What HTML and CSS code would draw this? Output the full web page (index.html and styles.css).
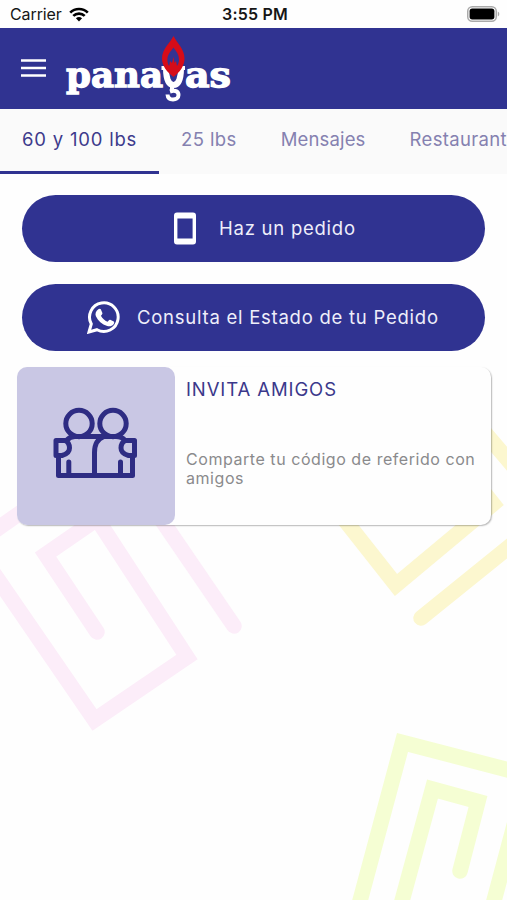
FILE: index.html
```html
<!DOCTYPE html>
<html lang="es">
<head>
<meta charset="utf-8">
<title>Panagas</title>
<link rel="stylesheet" href="styles.css">
</head>
<body>
<div class="app">
  <svg class="pattern" viewBox="0 0 507 900" fill="none" stroke-width="15.5" stroke-linecap="round">
    <g stroke="#fcedf9">
      <path d="M-14 562 94.500 720 187 657 97 519 45.500 554.500 97 632"/>
      <path d="M150 503 234 626"/>
      <path d="M-10 534 40 499"/>
    </g>
    <g stroke="#fcf7cf">
      <path d="M340 514 396 585 493 504 470 475"/>
      <path d="M421 618 520 538"/>
      <path d="M480 427 520 474"/>
    </g>
    <g stroke="#f5fed3">
      <path d="M357 912 402.500 742.500 520 773"/>
      <path d="M399 912 432.500 789 478 801.500 460 871"/>
      <path d="M491 912 515 822"/>
    </g>
  </svg>

  <div class="status">
    <div class="carrier">
      <span>Carrier</span>
      <svg class="wifi" viewBox="0 0 20 15" fill="none" stroke="#000" stroke-width="2.700">
        <path d="M1.200 5.600a12.600 12.600 0 0 1 17.600 0M4.300 8.900a8.200 8.200 0 0 1 11.400 0"/>
        <path d="M10 14.500 6.900 11.300a4.600 4.600 0 0 1 6.200 0Z" fill="#000" stroke="none"/>
      </svg>
    </div>
    <span class="time">3:55 PM</span>
    <svg class="battery" viewBox="0 0 33 16">
      <rect x=".75" y=".75" width="28.500" height="14.500" rx="4.500" fill="#fff" stroke="#aaa" stroke-width="1.500"/>
      <rect x="2.600" y="2.600" width="24.800" height="10.800" rx="2.600"/>
      <path d="M30.800 5.500q1.500.8 1.500 2.500t-1.500 2.500Z" fill="#aaa"/>
    </svg>
  </div>

  <header class="bar">
    <svg class="menu" viewBox="0 0 25 18" stroke="#fff" stroke-width="2.700"><path d="M0 1.500h25M0 9h25M0 16.500h25"/></svg>
    <svg class="logo" viewBox="0 0 170 70">
      <g class="logo-text">
        <text x="1" y="50.500" textLength="97" lengthAdjust="spacingAndGlyphs">pana</text>
        <text x="120" y="50.500" textLength="46" lengthAdjust="spacingAndGlyphs">as</text>
      </g>
      <g fill="none" stroke="#fff">
        <path d="M101 32c0 9 2 17 7.500 17s7.500-8 7.500-17" stroke-width="6"/>
        <path d="M96.500 32h6M114 32h6" stroke-width="4"/>
        <path d="M107 50v5.500" stroke-width="4"/>
        <path d="M105 55.500c6-2 8.500.5 8.500 3.500 0 3.200-2.600 4.500-5.500 4.500-3.200 0-5.300-1.700-5.500-5" stroke-width="4"/>
      </g>
      <path d="M108.500 0C112 7 119.500 13 119.500 22.500 119.500 30 115 36 108.500 41 102 36 97 30 97 22.500 97 13 105 7 108.500 0Z" fill="#d60c19"/>
      <path d="M108.500 11.500c3 4 5.500 7.500 5.500 12 0 3-1 5-2 6.500l-1-5-1.500 2-1-6-1.500 6-2-2-.8 5c-1.200-1.500-1.800-3.500-1.800-6.500 0-4.500 3-8 6.100-12Z" fill="#343391"/>
    </svg>
  </header>

  <nav class="tabs">
    <a class="tab active"><span class="t1">60 y 100 lbs</span></a>
    <a class="tab"><span class="t2">25 lbs</span></a>
    <a class="tab"><span class="t3">Mensajes</span></a>
    <a class="tab"><span class="t4">Restaurantes</span></a>
  </nav>

  <main>
    <button class="btn order">
      <svg class="phone" viewBox="0 0 22 33"><path fill="#fff" fill-rule="evenodd" d="M3 .5h16q3 0 3 3v26q0 3-3 3H3q-3 0-3-3v-26q0-3 3-3ZM3.400 6.500v20h15.200v-20Z"/></svg>
      <span>Haz un pedido</span>
    </button>
    <button class="btn state">
      <svg class="whats" viewBox="0 0 34 34">
        <path d="M2 32 4.300 24A14.300 14.300 0 1 1 10 29.700Z" fill="none" stroke="#fff" stroke-width="3"/>
        <path fill="#fff" d="M11.300 9.200c.7-.7 2-.8 2.500.1l1.600 3.700c.3 1-.9 2-1.500 2.800 1.600 2.900 3.700 4.700 6.600 5.900.9-.8 1.700-2.400 2.700-2l3.600 1.800c.8.5.2 2.300-.4 3.100-1.500 1.800-4 2.100-6.200 1.400-5.300-1.600-9.200-5-11.300-9.800-1-2.400-.1-5.300 2.400-7Z"/>
      </svg>
      <span>Consulta el Estado de tu Pedido</span>
    </button>

    <section class="card">
      <div class="thumb">
        <svg class="friends" viewBox="0 0 84 72" fill="none" stroke="#2e2c83" stroke-width="5" stroke-linejoin="round" stroke-linecap="round">
          <circle cx="26" cy="16.500" r="13.200"/>
          <circle cx="60" cy="16.500" r="13.200"/>
          <path d="M14 33q3-3.500 8-3.500h29q-9.500 3.500-9.500 16V68"/>
          <path d="M48 29.500h15q6 0 9 4"/>
          <path d="M5.500 68.500V49M5.500 68.500h74V49"/>
          <path d="M3 33.500h9q4.500 2 4.500 7.500T9 48.500H3Z"/>
          <path d="M81.500 33.500h-9q-4.500 2-4.500 7.500t7.500 7.500h6Z"/>
          <path d="M15.800 55v12M67.500 55v12"/>
        </svg>
      </div>
      <div class="info">
        <h2>INVITA AMIGOS</h2>
        <p><span>Comparte tu código de referido con</span> <span>amigos</span></p>
      </div>
    </section>
  </main>
</div>
</body>
</html>
```
FILE: styles.css
```css
* { box-sizing: border-box; }
body { margin: 0; background: #fefefe; font-family: Inter, "Liberation Sans", sans-serif; }
.app { position: relative; width: 507px; height: 900px; overflow: hidden; display: flex; flex-direction: column; isolation: isolate; }
.pattern { position: absolute; inset: 0; width: 507px; height: 900px; z-index: -1; }

.status { height: 28px; flex: none; display: grid; grid-template-columns: 1fr auto 1fr; align-items: center; padding: 0 7px 0 10px; background: #fefefe; font-size: 16px; color: #161616; }
.carrier { display: flex; align-items: center; gap: 7px; letter-spacing: -.1px; }
.wifi { width: 20px; height: 15px; }
.time { font-weight: 600; font-size: 16px; letter-spacing: .2px; }
.battery { width: 33px; height: 16px; justify-self: end; }

.bar { height: 80.5px; flex: none; display: flex; align-items: flex-start; background: #303391; padding-left: 21px; }
.menu { width: 25px; height: 18px; margin-top: 31px; }
.logo { width: 170px; height: 70px; margin: 8px 0 0 19px; }
.logo-text { font-family: "DejaVu Serif", serif; font-weight: 700; font-size: 36px; fill: #fff; stroke: #fff; stroke-width: 1.3px; }

.tabs { height: 65px; flex: none; display: flex; background: #fafafa; overflow: hidden; }
.tab { flex: none; padding: 17px 22px 0; height: 65px; font-size: 18.5px; line-height: 26px; color: #8581b0; white-space: nowrap; }
.tab.active { width: 159px; color: #3d3a8c; border-bottom: 3px solid #303391; }
.t1 { letter-spacing: .8px; }
.t2 { letter-spacing: .4px; }
.t3 { letter-spacing: .15px; }
.t4 { letter-spacing: .35px; }

main { padding: 21px 16px 0 17px; }
.btn { display: flex; align-items: center; width: 463px; height: 67.5px; margin: 0 0 21.5px 5px; padding: 0; border: 0; border-radius: 34px; background: #303391; color: #eeeefa; font: 18.5px Inter, sans-serif; letter-spacing: .75px; white-space: nowrap; }
.btn span { margin-top: -1px; }
.order { padding-left: 152px; gap: 23px; }
.state { padding-left: 65px; gap: 16px; margin-bottom: 16px; }
.phone { width: 22px; height: 33px; }
.whats { width: 34px; height: 34px; }

.card { display: flex; width: 474px; height: 158px; border-radius: 10px; background: #fefefe; box-shadow: 1px 1px 1.5px rgba(0,0,0,.28); }
.thumb { width: 158px; height: 158px; flex: none; border-radius: 10px; background: #c9c7e4; display: flex; align-items: center; justify-content: center; }
.friends { width: 84px; height: 72px; margin: -6px 2px 0 0; }
.info { padding: 10px 0 0 11px; white-space: nowrap; }
.info h2 { margin: 0; font-size: 18.5px; line-height: 24px; font-weight: 400; letter-spacing: .9px; color: #3b388b; }
.info p { margin: 49px 0 0; font-size: 16px; line-height: 18.5px; color: #8a8a8c; }
.info p span { display: block; letter-spacing: .55px; }
```
